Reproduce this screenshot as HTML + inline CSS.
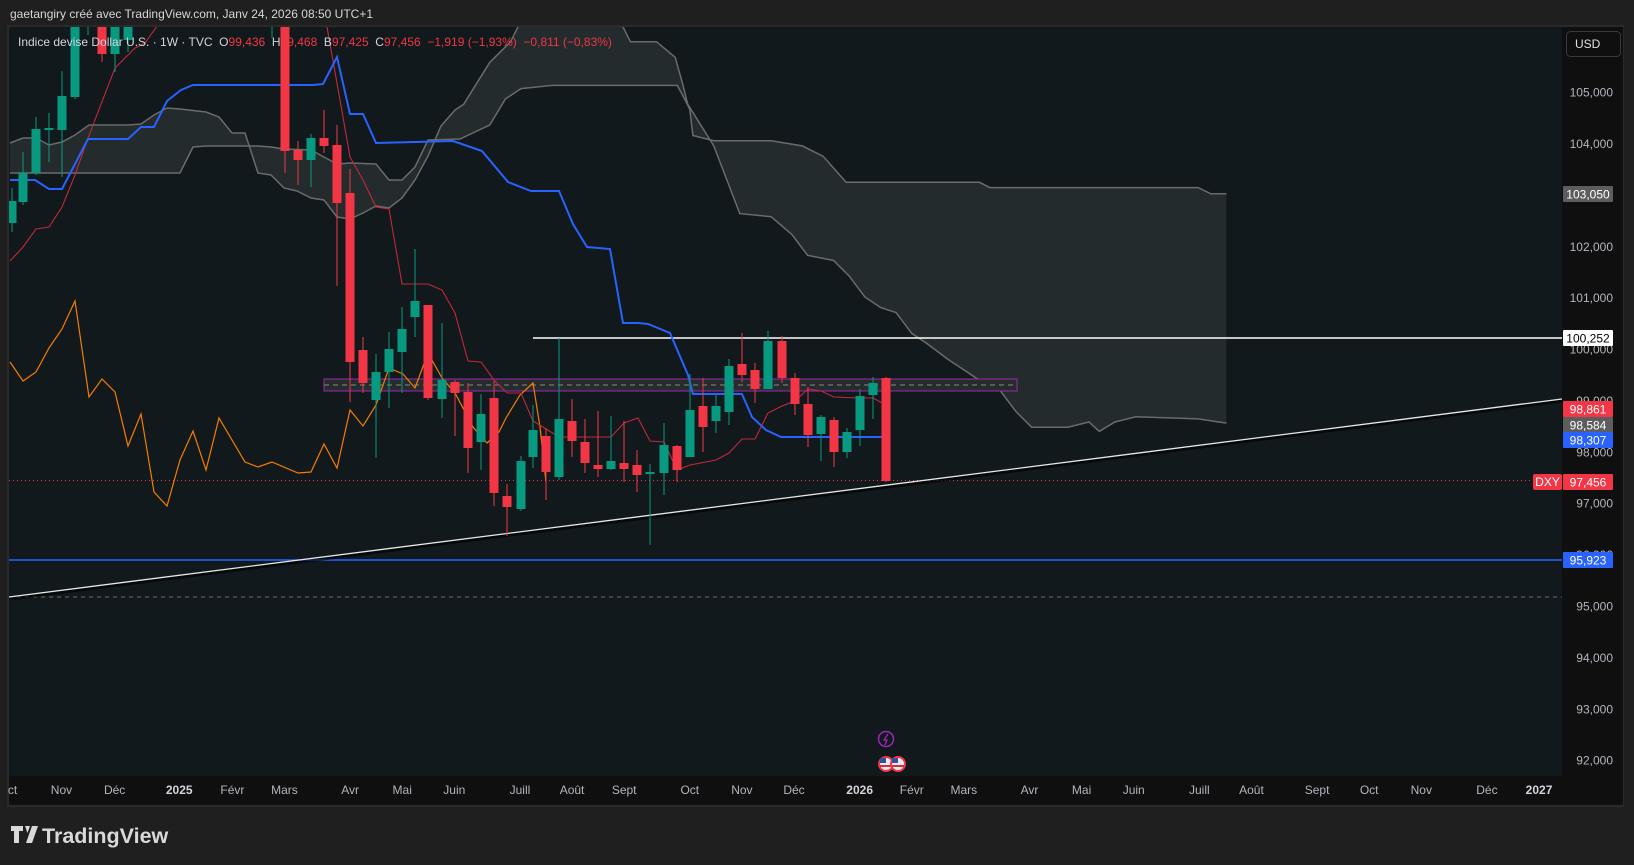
<!DOCTYPE html>
<html><head><meta charset="utf-8"><style>
html,body{margin:0;padding:0;background:#1f1f1f;width:1634px;height:865px;overflow:hidden}
svg{display:block}
text{font-family:"Liberation Sans",sans-serif}
</style></head><body>
<svg id="s" width="1634" height="865" viewBox="0 0 1634 865" xmlns="http://www.w3.org/2000/svg">
<rect x="0" y="0" width="1634" height="865" fill="#1f1f1f"/>
<rect x="7" y="25" width="1617" height="782" fill="#2a2a2a"/>
<rect x="9" y="27" width="1553" height="749" fill="#11191c"/>
<rect x="1562" y="27" width="61" height="778" fill="#0f0f0f"/>
<rect x="9" y="776" width="1553" height="29" fill="#0f0f0f"/>
<defs><clipPath id="cl"><rect x="9" y="27" width="1553" height="749"/></clipPath></defs>
<g id="chart" clip-path="url(#cl)"></g>
<g id="ax"></g>
<text x="10" y="18" font-size="12" fill="#d6d6d6">gaetangiry créé avec TradingView.com, Janv 24, 2026 08:50 UTC+1</text>
<text x="18" y="46" font-size="12" fill="#d1d4dc" xml:space="preserve">Indice devise Dollar U.S. · 1W · TVC  O<tspan fill="#f23645">99,436</tspan>  H<tspan fill="#f23645">99,468</tspan>  B<tspan fill="#f23645">97,425</tspan>  C<tspan fill="#f23645">97,456</tspan>  <tspan fill="#f23645">−1,919 (−1,93%)  −0,811 (−0,83%)</tspan></text>
<rect x="1566.5" y="31.5" width="54" height="25" rx="4" fill="#0f0f0f" stroke="#3a3a3a"/>
<text x="1575" y="48" font-size="12" fill="#e0e0e0">USD</text>
<g fill="#d9d9d9">
<path d="M11 826h12v5h-4v12h-5v-12h-3z M25 826h5l-2.5 7z M32 826h6l-6 17h-6z"/>
<text x="42" y="843" font-size="21.5" font-weight="bold" fill="#d9d9d9">TradingView</text>
</g>
</svg>
<script>
const NS="http://www.w3.org/2000/svg";
const C=document.getElementById('chart'),A=document.getElementById('ax');
function el(p,t,a,txt){const e=document.createElementNS(NS,t);for(const k in a)e.setAttribute(k,a[k]);if(txt!=null)e.textContent=txt;p.appendChild(e);return e;}
const S=1.042;
function sc(a){return a.map(p=>[p[0]*S,p[1]*S]);}
function pts(a){return a.map(p=>p[0].toFixed(1)+','+p[1].toFixed(1)).join(' ');}
let L1=[[10,173],[180,173],[193,147],[206,146],[258,146],[271,147],[284,149],[311,150],[324,157],[337,164],[350,163],[376,164],[389,180],[402,180],[415,167],[428,140],[460,139]]
.concat(sc([[470,120],[485,95],[500,85],[530,82],[650,82],[657,95],[662,105],[665,130],[685,135],[740,135],[770,140],[790,150],[812,175],[940,175],[950,180],[1150,180],[1162,186],[1177,186]]));
let L2=[[10,143],[23,138],[36,138],[49,145],[62,142],[75,135],[89,125],[128,125],[141,124],[154,115],[167,108],[180,109],[206,112],[219,117],[232,133],[245,133],[258,173],[271,175],[284,188],[297,191],[311,198],[324,200],[337,217],[350,219],[363,213],[376,206],[389,208],[402,198],[415,180],[428,156],[441,126],[455,110]]
.concat(sc([[445,100],[470,60],[490,40],[500,20],[595,20],[605,40],[630,40],[648,55],[655,80],[660,100],[685,140],[710,205],[740,208],[760,225],[775,245],[800,250],[815,265],[830,285],[845,295],[860,300],[875,320],[890,330],[910,345],[925,355],[940,365],[960,375],[975,395],[990,410],[1025,410],[1045,405],[1055,414],[1070,405],[1090,400],[1150,402],[1177,406]]));
el(C,'polygon',{points:pts(L1.concat(L2.slice().reverse())),fill:'#232b2c'});
el(C,'polyline',{points:pts(L1),fill:'none',stroke:'#6b6b6b','stroke-width':1.5});
el(C,'polyline',{points:pts(L2),fill:'none',stroke:'#6b6b6b','stroke-width':1.5});
el(C,'line',{x1:9,y1:597,x2:1562,y2:597,stroke:'#6a6a6a','stroke-dasharray':'4 4'});
el(C,'line',{x1:9,y1:560,x2:1562,y2:560,stroke:'#2962ff','stroke-width':1.5});
el(C,'line',{x1:9,y1:480.5,x2:1532,y2:480.5,stroke:'#f23645','stroke-dasharray':'1 3'});
el(C,'rect',{x:324,y:379,width:693,height:12,fill:'#262b2b',stroke:'#9c27b0','stroke-width':1});
el(C,'line',{x1:324,y1:385,x2:1017,y2:385,stroke:'#888','stroke-dasharray':'5 4'});
el(C,'line',{x1:533,y1:338,x2:1562,y2:338,stroke:'#ffffff','stroke-width':1.5});
el(C,'line',{x1:9,y1:599,x2:1562,y2:401,stroke:'#000','stroke-width':3,opacity:.6});
el(C,'line',{x1:9,y1:597,x2:1562,y2:399,stroke:'#e8e8e8','stroke-width':1.3});
el(C,'polyline',{points:pts([[10,362],[23,381],[36,372],[49,348],[62,329],[75,301],[89,397],[102,379],[115,392],[128,446],[141,414],[154,492],[167,506],[180,460],[193,431],[206,470],[219,418],[245,462],[258,467],[272,462],[298,473],[311,472],[324,444],[337,468],[350,410],[363,426],[376,405],[389,368],[403,374],[415,388],[428,353],[442,378],[455,393],[473,427],[487,443],[499,432],[506,418],[520,395],[533,383],[540,427],[546,482]]),fill:'none',stroke:'#f57c00','stroke-width':1.2});
el(C,'polyline',{points:pts([[10,261],[23,247],[36,229],[49,227],[62,207],[75,175],[88,138],[115,68],[135,48],[145,43],[165,15],[320,15],[327,27],[340,100],[350,157],[363,180],[376,207],[389,209],[402,284],[428,284],[442,290],[455,313],[468,361],[481,362],[494,380],[507,393],[521,393],[533,421],[546,429],[559,437],[611,437],[624,423],[638,418],[650,441],[664,442],[677,470],[690,465],[716,460],[729,453],[742,439],[755,439],[768,413],[782,406],[795,401],[808,389],[821,391],[834,397],[860,398],[873,398],[886,405]]),fill:'none',stroke:'#c2283b','stroke-width':1.1});
el(C,'polyline',{points:pts([[10,180],[35,180],[49,189],[62,189],[88,139],[128,139],[141,127],[154,127],[167,101],[181,90],[193,85],[313,85],[323,84],[337,57],[350,114],[363,114],[376,143],[453,141],[482,151],[508,182],[531,191],[559,191],[573,224],[587,247],[610,249],[623,323],[638,323],[648,324],[670,333],[688,375],[693,394],[742,394],[752,417],[766,430],[781,437],[886,437]]),fill:'none',stroke:'#2962ff','stroke-width':2});
const G='#089981',R='#f23645';
const cd=[[12,201,223,188,232,G],[23,173,202,152,205,G],[36,129,173,117,175,G],[49,128,130,113,162,G],[62,96,130,71,177,G],[75,0,97,0,99,G],[88,0,20,0,35,G],[102,0,54,0,62,R],[115,0,54,0,72,G],[128,0,40,0,52,G],[272,0,10,0,38,G],
[285,0,151,0,173,R],[298,150,160,141,185,R],[311,138,160,134,187,G],[324,138,146,110,153,R],[337,145,203,125,286,R],[350,193,362,169,402,R],[363,350,383,337,393,R],[376,372,400,354,458,G],[389,349,372,332,408,G],[402,329,352,307,393,G],[415,301,317,249,337,G],[428,305,398,305,400,R],[442,380,399,323,418,G],[455,382,393,380,436,R],[468,392,448,383,473,R],[481,414,442,394,470,G],[494,398,493,381,506,R],[507,496,507,484,536,R],[521,461,509,456,511,G],[533,430,457,405,468,G],[546,436,472,428,500,R],[559,419,477,338,480,G],[572,421,441,399,457,R],[585,442,463,419,473,R],[598,465,469,411,477,R],[611,461,469,416,470,G],[624,463,469,421,482,R],[637,465,475,450,492,R],[650,472,474,464,545,G],[664,445,473,423,495,G],[677,446,470,445,482,R],[690,410,457,374,457,G],[703,406,427,378,452,R],[716,406,421,395,433,G],[729,366,412,359,425,G],[742,364,375,333,382,R],[755,370,389,363,403,R],[768,341,389,331,389,G],[782,341,378,336,383,R],[795,378,404,373,415,R],[808,404,435,387,447,R],[821,417,434,415,461,G],[834,420,452,417,467,R],[847,432,452,428,458,G],[860,396,430,389,446,G],[873,383,395,377,419,G],[886,378,481,377,482,R]];
cd.forEach(c=>{el(C,'rect',{x:c[0]-0.5,y:c[3],width:1,height:c[4]-c[3],fill:c[5]});el(C,'rect',{x:c[0]-4.5,y:c[1],width:9,height:Math.max(2,c[2]-c[1]),fill:c[5]});});
el(C,'circle',{cx:886,cy:739,r:7.5,fill:'#11191c',stroke:'#9c27b0','stroke-width':1.5});
el(C,'path',{d:'M888 734l-4 6h3l-2 5',fill:'none',stroke:'#9c27b0','stroke-width':1.3});
[[886,764],[898,764]].forEach(p=>{el(C,'circle',{cx:p[0],cy:p[1],r:8,fill:'#f23645'});el(C,'circle',{cx:p[0],cy:p[1],r:6,fill:'#e8e8f0'});el(C,'rect',{x:p[0]-6,y:p[1]-6,width:6,height:5,fill:'#3050a0'});el(C,'rect',{x:p[0]-6,y:p[1]+1,width:12,height:2,fill:'#d03040'});});
for(let p=105;p>=92;p--){const y=92.7+(105-p)*51.38;el(A,'text',{x:1613,y:y+4,'font-size':12,fill:'#b2b5be','text-anchor':'end'},p+',000');}
function lab(y,bg,fg,t){el(A,'rect',{x:1563,y:y-8,width:50,height:16,fill:bg,rx:1});el(A,'text',{x:1588,y:y+4.5,'font-size':12,fill:fg,'text-anchor':'middle'},t);}
lab(194,'#5d5d5d','#fff','103,050');lab(338,'#ffffff','#000','100,252');
lab(409,'#f23645','#fff','98,861');lab(425,'#5d5d5d','#fff','98,584');lab(440,'#2962ff','#fff','98,307');
lab(482,'#f23645','#fff','97,456');lab(560,'#2962ff','#fff','95,923');
el(A,'rect',{x:1533,y:474,width:29,height:16,fill:'#f23645',rx:2});el(A,'text',{x:1547.5,y:486,'font-size':12,fill:'#fff','text-anchor':'middle'},'DXY');
const tl=[[12,'ct'],[59,'Nov'],[110,'Déc'],[172,'2025'],[223,'Févr'],[273,'Mars'],[336,'Avr'],[386,'Mai'],[436,'Juin'],[499,'Juill'],[549,'Août'],[599,'Sept'],[662,'Oct'],[712,'Nov'],[762,'Déc'],[825,'2026'],[875,'Févr'],[925,'Mars'],[988,'Avr'],[1038,'Mai'],[1088,'Juin'],[1151,'Juill'],[1201,'Août'],[1264,'Sept'],[1314,'Oct'],[1364,'Nov'],[1427,'Déc'],[1477,'2027']];
tl.forEach(t=>{const b=/^20/.test(t[1]);el(A,'text',{x:t[0]*S,y:794,'font-size':12,fill:b?'#d1d4dc':'#b2b5be','font-weight':b?'bold':'normal','text-anchor':'middle'},t[1]);});
</script>
</body></html>
